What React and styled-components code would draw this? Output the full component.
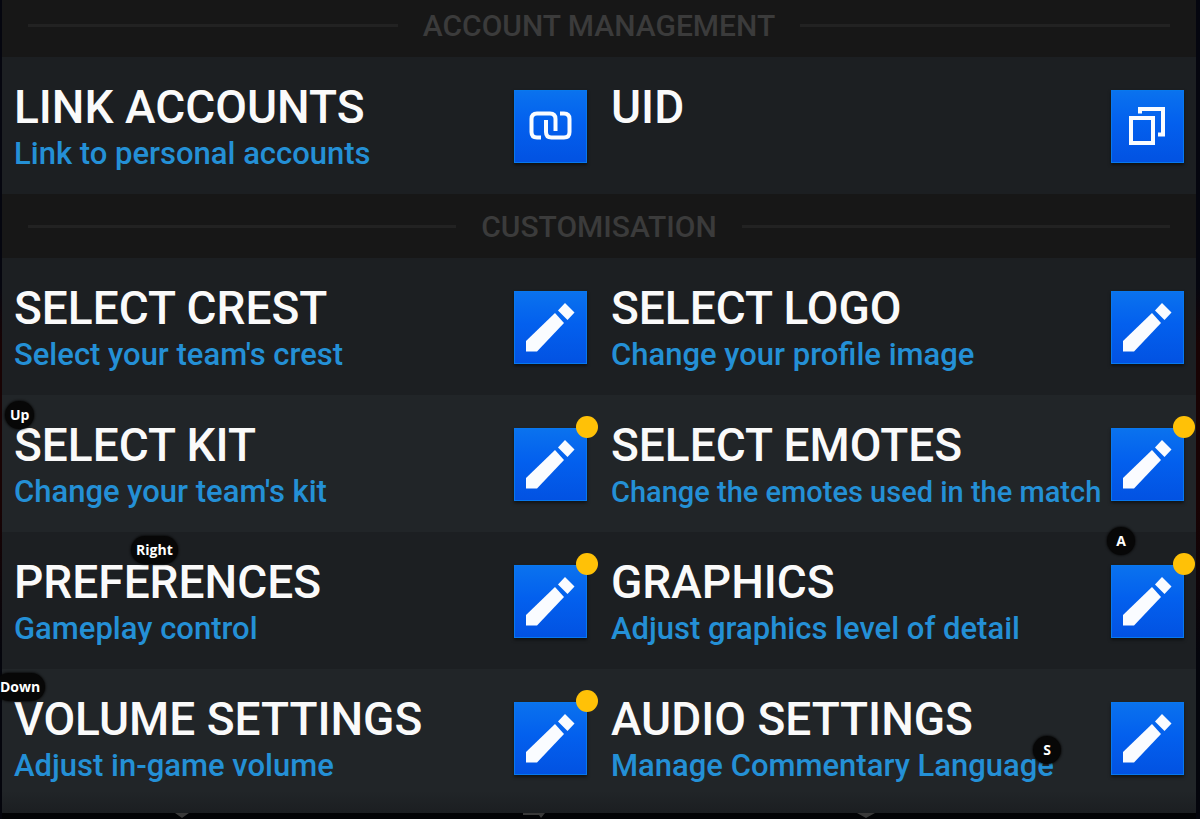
import React from "react";
import styled, { createGlobalStyle } from "styled-components";

const GlobalStyle = createGlobalStyle`
  * { box-sizing: border-box; }
  body {
    margin: 0;
    background: #030509;
    font-family: Roboto, "Liberation Sans", sans-serif;
    overflow-x: hidden;
  }
`;

const Screen = styled.main`
  min-height: 100vh;
  padding: 0 4px 0 2px;
  overflow: hidden;
  background: linear-gradient(#05060f 0 35%, #180304 42% 62%, #04050c 80%);
`;

const SectionHeader = styled.header`
  display: flex;
  align-items: center;
  gap: 25px;
  height: 64px;
  margin-top: ${(p) => (p.$clipped ? "-7px" : "0")};
  padding: 0 26px;
  background: #171717;

  &::before,
  &::after {
    content: "";
    flex: 1;
    height: 3px;
    background: #222;
  }
`;

const SectionTitle = styled.h2`
  margin: 0;
  padding-top: 2px;
  font-size: 30px;
  line-height: 40px;
  font-weight: 500;
  color: #3b3b3b;
  white-space: nowrap;
`;

const Row = styled.div`
  display: grid;
  grid-template-columns: 1fr 1fr;
  min-height: ${(p) => (p.$last ? "144px" : "137px")};
  background: ${(p) =>
    p.$last
      ? "linear-gradient(#212528 85%, #1b1e21)"
      : p.$light
        ? "#212528"
        : "#1c1f22"};
`;

const Item = styled.section`
  position: relative;
  display: flex;
  align-items: flex-start;
  justify-content: space-between;
  min-width: 0;
  padding: 24px 12px 0;
`;

const Copy = styled.div`
  min-width: 0;
  white-space: nowrap;
`;

const ItemTitle = styled.h3`
  margin: 0;
  font-size: 46px;
  line-height: 52px;
  font-weight: 500;
  color: #fafafa;
`;

const ItemNote = styled.p`
  margin: 0;
  font-size: ${(p) => (p.$compact ? "29px" : "31px")};
  line-height: 42px;
  font-weight: 500;
  color: #2490d6;
`;

const ActionButton = styled.button`
  position: relative;
  flex: none;
  display: grid;
  place-items: center;
  width: 73px;
  height: 73px;
  margin-top: 9px;
  padding: 0;
  border: 1px solid #0878ee;
  background: linear-gradient(#0a72ee, #0360ee 45%, #0252e2);
  box-shadow: 0 2px 3px rgba(0, 0, 0, 0.5);
  color: #fafcff;
  cursor: pointer;

  svg {
    display: block;
    width: 71px;
    height: 71px;
  }
`;

const Dot = styled.span`
  position: absolute;
  top: -13px;
  right: -12px;
  width: 22px;
  height: 22px;
  border-radius: 50%;
  background: #ffc107;
`;

const KeyHint = styled.kbd`
  position: absolute;
  z-index: 1;
  top: ${(p) => p.$top}px;
  left: ${(p) => p.$left ?? "auto"};
  right: ${(p) => p.$right ?? "auto"};
  min-width: 28px;
  padding: 0 5px;
  border-radius: 14px;
  background: #070707;
  box-shadow: 0 0 2px 1px rgba(7, 7, 7, 0.7);
  color: #fff;
  font: 700 14px/28px "Open Sans", "Noto Sans", sans-serif;
  text-align: center;
`;

const FooterArt = styled.svg`
  display: block;
  width: 100%;
  height: 6px;
  background: #020305;
`;

const icons = {
  link: (
    <svg viewBox="0 0 71 71" fill="none" stroke="currentColor" strokeWidth="4" aria-hidden="true">
      <path d="M26 46.500H22q-5.500 0-5.500-5.500V28q0-5.500 5.500-5.500H35q5.500 0 5.500 5.500V40" />
      <path d="M31 29V41q0 5.500 5.500 5.500H49q5.500 0 5.500-5.500V28q0-5.500-5.500-5.500H45" />
    </svg>
  ),
  copy: (
    <svg viewBox="0 0 71 71" fill="none" stroke="currentColor" strokeWidth="4" aria-hidden="true">
      <rect x="19" y="27" width="22" height="25" />
      <path d="M28 22.500V18H51V43.500H46" />
    </svg>
  ),
  pencil: (
    <svg viewBox="0 0 71 71" fill="currentColor" aria-hidden="true">
      <path d="M11 49 40 21l9 10L22 59.500H11Z" />
      <path d="m43 18.500 7-7.500 9.500 9.500-7 7.500Z" />
    </svg>
  ),
};

const sections = [
  {
    title: "ACCOUNT MANAGEMENT",
    rows: [
      [
        { title: "LINK ACCOUNTS", note: "Link to personal accounts", icon: "link" },
        { title: "UID", icon: "copy" },
      ],
    ],
  },
  {
    title: "CUSTOMISATION",
    rows: [
      [
        { title: "SELECT CREST", note: "Select your team's crest" },
        { title: "SELECT LOGO", note: "Change your profile image" },
      ],
      [
        { title: "SELECT KIT", note: "Change your team's kit", dot: true, hint: { label: "Up", top: 6, left: "3px" } },
        { title: "SELECT EMOTES", note: "Change the emotes used in the match", compact: true, dot: true },
      ],
      [
        { title: "PREFERENCES", note: "Gameplay control", dot: true, hint: { label: "Right", top: 4, left: "129px" } },
        { title: "GRAPHICS", note: "Adjust graphics level of detail", dot: true, hint: { label: "A", top: -5, right: "61px" } },
      ],
      [
        { title: "VOLUME SETTINGS", note: "Adjust in-game volume", dot: true, hint: { label: "Down", top: 4, left: "-7px" } },
        { title: "AUDIO SETTINGS", note: "Manage Commentary Language", hint: { label: "S", top: 67, left: "434px" } },
      ],
    ],
  },
];

function Setting({ title, note, compact, icon = "pencil", dot, hint }) {
  return (
    <Item>
      <Copy>
        <ItemTitle>{title}</ItemTitle>
        {note && <ItemNote $compact={compact}>{note}</ItemNote>}
      </Copy>
      <ActionButton type="button" aria-label={title}>
        {icons[icon]}
        {dot && <Dot />}
      </ActionButton>
      {hint && (
        <KeyHint $top={hint.top} $left={hint.left} $right={hint.right}>
          {hint.label}
        </KeyHint>
      )}
    </Item>
  );
}

export default function App() {
  return (
    <>
      <GlobalStyle />
      <Screen>
        {sections.map((section, s) => (
          <React.Fragment key={section.title}>
            <SectionHeader $clipped={s === 0}>
              <SectionTitle>{section.title}</SectionTitle>
            </SectionHeader>
            {section.rows.map((row, r) => (
              <Row key={r} $light={r % 2 === 1} $last={r === 3}>
                {row.map((item) => (
                  <Setting key={item.title} {...item} />
                ))}
              </Row>
            ))}
          </React.Fragment>
        ))}
        <FooterArt viewBox="0 0 1194 6" preserveAspectRatio="none" aria-hidden="true">
          <path d="M173 0h14l-7 5ZM521 0h22l-4 5-2-3h-16ZM855 0h18l-9 5Z" fill="#393939" />
        </FooterArt>
      </Screen>
    </>
  );
}
